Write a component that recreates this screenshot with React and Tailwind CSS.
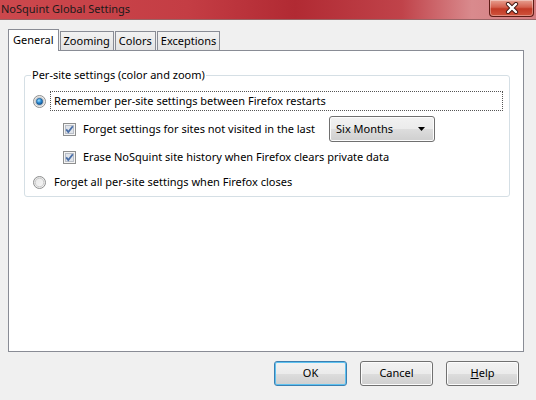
import React, { useState } from 'react';

const font = { fontFamily: '"Segoe UI", "Noto Sans", sans-serif' };

const Radio = ({ checked }) => (
  <svg width="13" height="13" viewBox="0 0 13 13" className="shrink-0">
    <defs>
      <linearGradient id={checked ? 'rg1' : 'rg0'} x1="0" y1="0" x2="1" y2="1">
        <stop offset="0" stopColor="#e6e6e6" />
        <stop offset="1" stopColor="#f8f8f8" />
      </linearGradient>
      <radialGradient id="dot" cx="0.4" cy="0.35" r="0.7">
        <stop offset="0" stopColor="#9ee0ff" />
        <stop offset="0.5" stopColor="#2a8ad4" />
        <stop offset="1" stopColor="#0d4f8f" />
      </radialGradient>
    </defs>
    <circle cx="6.5" cy="6.5" r="6" fill={checked ? 'url(#rg1)' : 'url(#rg0)'} stroke="#8e8f8f" />
    <circle cx="6.5" cy="6.5" r="4.3" fill="none" stroke="#c9c9c9" strokeWidth="1" />
    {checked && <circle cx="6.5" cy="6.5" r="3.2" fill="url(#dot)" stroke="#1b4f80" strokeWidth="0.6" />}
  </svg>
);

const Checkbox = () => (
  <svg width="13" height="13" viewBox="0 0 13 13" className="shrink-0">
    <rect x="0.5" y="0.5" width="12" height="12" fill="#f4f4f4" stroke="#8e8f8f" />
    <rect x="2.5" y="2.5" width="8" height="8" fill="#e0e4ea" stroke="#b9bec7" />
    <path d="M3.2 6.4 L5.3 9 L9.8 3.2" fill="none" stroke="#4a6fa8" strokeWidth="1.8" />
  </svg>
);

const Button = ({ children, isDefault }) => (
  <button
    className={`w-[73px] h-[25px] rounded-[3px] border text-[11px] text-black bg-[linear-gradient(#f2f2f2_0%,#ebebeb_50%,#dddddd_51%,#cfcfcf_100%)] ${
      isDefault ? 'border-[#3c7fb1] shadow-[inset_0_0_0_1px_#5ec2f0]' : 'border-[#707070] shadow-[inset_0_0_0_1px_#fcfcfc]'
    }`}
    style={font}
  >
    {children}
  </button>
);

const tabs = ['General', 'Zooming', 'Colors', 'Exceptions'];

export default function App() {
  const [active] = useState('General');

  return (
    <div className="w-[536px] h-[400px] bg-[#f0f0f0] flex flex-col overflow-hidden text-[11px] text-black" style={font}>
      {/* Title bar */}
      <div className="h-[20px] shrink-0 flex items-start justify-between border-b border-[#9a6466] bg-[linear-gradient(to_right,#cc484d_0%,#c43d44_35%,#b12a33_55%,#c0434a_75%,#d98a8d_88%,#d57e82_100%)]">
        <span className="pl-[1px] leading-[18px] text-[11px] text-[#1a1a1a]">NoSquint Global Settings</span>
        <div className="mr-[2px] w-[45px] h-[17px] rounded-b-[4px] border border-t-0 border-[#5e1c16] bg-[linear-gradient(#e7a091_0%,#d4604e_45%,#c23a26_55%,#d0533c_100%)] shadow-[inset_0_0_0_1px_rgba(255,255,255,0.35)] flex items-center justify-center">
          <svg width="14" height="12" viewBox="0 0 14 12">
            <path d="M3 2 L11 10 M11 2 L3 10" stroke="#3d1410" strokeWidth="4.2" strokeLinecap="round" />
            <path d="M3 2 L11 10 M11 2 L3 10" stroke="#ffffff" strokeWidth="2.4" strokeLinecap="round" />
          </svg>
        </div>
      </div>

      <div className="px-[8px] pt-[9px]">
        {/* Tabs */}
        <div className="flex items-end h-[21px] relative z-10">
          {tabs.map((t) =>
            t === active ? (
              <div key={t} className="h-[22px] -mb-[1px] px-[4px] border border-b-0 border-[#898c95] bg-white leading-[18px] pt-[1px]">
                {t}
              </div>
            ) : (
              <div key={t} className="h-[19px] ml-[1px] px-[3px] border border-b-0 border-[#898c95] bg-[linear-gradient(#f2f2f2,#e3e3e3)] leading-[18px]">
                {t}
              </div>
            )
          )}
        </div>

        {/* Panel */}
        <div className="w-[516px] h-[302px] border border-[#898c95] bg-white pt-[17px] pl-[15px]">
          <fieldset className="w-[486px] h-[129px] border border-[#d5dfe5] rounded-[3px] px-[6px]">
            <legend className="px-[1px] leading-[14px]">Per-site settings (color and zoom)</legend>

            <div className="flex items-center h-[20px] mt-[9px] ml-[2px]">
              <Radio checked />
              <div className="ml-[4px] flex-1 h-[20px] border border-dotted border-[#555] pl-[3px] leading-[18px]">
                Remember per-site settings between Firefox restarts
              </div>
            </div>

            <div className="flex items-center h-[26px] mt-[5px] ml-[32px]">
              <Checkbox />
              <span className="ml-[7px] w-[246px] whitespace-nowrap">Forget settings for sites not visited in the last</span>
              <div className="w-[106px] h-[26px] rounded-[3px] border border-[#707070] bg-[linear-gradient(#f2f2f2_0%,#ebebeb_50%,#dddddd_51%,#cfcfcf_100%)] shadow-[inset_0_0_0_1px_#fcfcfc] flex items-center justify-between pl-[6px] pr-[9px]">
                <span>Six Months</span>
                <svg width="7" height="4" viewBox="0 0 7 4">
                  <path d="M0 0 L7 0 L3.5 4 Z" fill="#000" />
                </svg>
              </div>
            </div>

            <div className="flex items-center h-[20px] mt-[5px] ml-[32px]">
              <Checkbox />
              <span className="ml-[7px]">Erase NoSquint site history when Firefox clears private data</span>
            </div>

            <div className="flex items-center h-[20px] mt-[5px] ml-[2px]">
              <Radio />
              <span className="ml-[8px]">Forget all per-site settings when Firefox closes</span>
            </div>
          </fieldset>
        </div>
      </div>

      {/* Buttons */}
      <div className="flex justify-end gap-[13px] pr-[17px] mt-[9px]">
        <Button isDefault>OK</Button>
        <Button>Cancel</Button>
        <Button>
          <span className="underline">H</span>elp
        </Button>
      </div>
    </div>
  );
}
